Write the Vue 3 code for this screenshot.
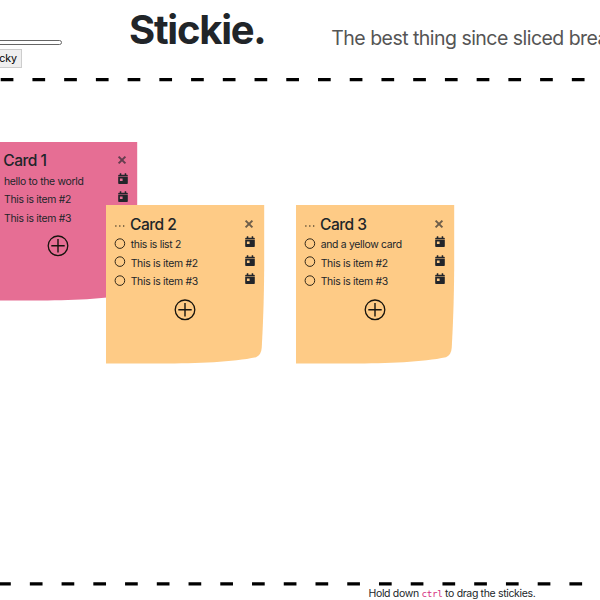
<script setup>
const cards = [
  { id: 1, x: -21, y: 141.5, color: '#e66e94', title: 'Card 1', items: ['hello to the world', 'This is item #2', 'This is item #3'] },
  { id: 2, x: 105.7, y: 205, color: '#fecb86', title: 'Card 2', items: ['this is list 2', 'This is item #2', 'This is item #3'] },
  { id: 3, x: 295.7, y: 205, color: '#fecb86', title: 'Card 3', items: ['and a yellow card', 'This is item #2', 'This is item #3'] },
]
</script>

<template>
  <div class="page">
    <header class="header">
      <div class="creator">
        <div class="field"></div>
        <button class="add">Add sticky</button>
      </div>
      <h1 class="brand">Stickie.</h1>
      <p class="tagline">The best thing since sliced bread.</p>
    </header>
    <svg class="rule" width="600" height="4" viewBox="0 0 600 4">
      <line x1="0.7" y1="1.6" x2="600" y2="1.6" stroke="#000" stroke-width="3.2" stroke-dasharray="12.7 19.03" />
    </svg>

    <main class="board">
      <section v-for="card in cards" :key="card.id" class="card" :style="{ left: card.x + 'px', top: card.y - 82 + 'px' }">
        <svg class="paper" width="159" height="159" viewBox="0 0 159 159">
          <path d="M0 0H158.2V62C158 94 157 120 155.7 143Q155.2 150 150 152.2C127 157 92 158.4 55 158.4H0Z" :fill="card.color" />
        </svg>
        <div class="content">
          <div class="title-row">
            <svg class="dots" width="12" height="4" viewBox="0 0 12 4" fill="#3c3322">
              <circle cx="1.9" cy="2" r=".75" /><circle cx="5.8" cy="2" r=".75" /><circle cx="9.7" cy="2" r=".75" />
            </svg>
            <h2 class="title">{{ card.title }}</h2>
            <svg class="close" width="10" height="10" viewBox="0 0 10 10">
              <path d="M1.6 1.6L8.4 8.4M8.4 1.6L1.6 8.4" fill="none" stroke="#20242a" stroke-opacity=".65" stroke-width="2" />
            </svg>
          </div>
          <div v-for="item in card.items" :key="item" class="item">
            <svg class="check" width="12" height="12" viewBox="0 0 12 12">
              <circle cx="5.9" cy="5.6" r="4.8" fill="none" stroke="#302719" stroke-width="1" />
            </svg>
            <span class="label">{{ item }}</span>
            <svg class="calendar" width="10" height="12" viewBox="0 0 10 12">
              <path d="M1.8 .3h1.5v1.4h3.4V.3h1.5v1.4h.8q.8 0 .8.8v1H.2v-1q0-.8.8-.8h.8Z" fill="#22252a" />
              <path fill-rule="evenodd" d="M.2 4h9.6v6.2q0 .8-.8.8H1q-.8 0-.8-.8ZM1.9 5.5v2.6h2.7V5.500Z" fill="#22252a" />
            </svg>
          </div>
          <svg class="plus" width="22" height="22" viewBox="0 0 22 22">
            <path d="M11 4.100V17.500M4.300 10.800H17.700" stroke="#16130d" stroke-width="1.400" />
            <circle cx="11" cy="10.800" r="9.800" fill="none" stroke="#16130d" stroke-width="1.300" />
          </svg>
        </div>
      </section>
    </main>

    <footer class="footer">
      <svg class="rule" width="600" height="4" viewBox="0 0 600 4">
        <line x1="-1.9" y1="1.9" x2="582.5" y2="1.9" stroke="#000" stroke-width="3.2" stroke-dasharray="12.7 19.04" />
      </svg>
      <p class="hint">Hold down <code>ctrl</code> to drag the stickies.</p>
    </footer>
  </div>
</template>

<style>
body {
  margin: 0;
  background: #fff;
  overflow: hidden;
}
</style>

<style scoped>
.page {
  width: 600px;
  height: 600px;
  overflow: hidden;
  display: flex;
  flex-direction: column;
  font-family: Inter, "Liberation Sans", sans-serif;
  color: #212529;
}
.header {
  height: 78px;
  flex: none;
  display: flex;
  align-items: flex-start;
  white-space: nowrap;
}
.creator {
  width: 129px;
  flex: none;
  padding-top: 39.5px;
  display: flex;
  flex-direction: column;
  align-items: flex-start;
}
.field {
  box-sizing: border-box;
  width: 92px;
  height: 5.5px;
  margin-left: -30px;
  border: 1px solid #666;
  border-radius: 3px;
}
.add {
  box-sizing: border-box;
  height: 19px;
  width: 62px;
  margin: 3.5px 0 0 -40px;
  padding: 0 4px 0 0;
  text-align: right;
  border: 1px solid #cdcdcd;
  background: #efefef;
  color: #000;
  font: 10.7px/17px Inter, sans-serif;
  letter-spacing: -0.1px;
}
.brand {
  width: 202.3px;
  flex: none;
  margin: 6px 0 0;
  font-size: 40px;
  line-height: 48px;
  font-weight: 700;
  letter-spacing: -1.25px;
}
.tagline {
  margin: 26px 0 0;
  font-size: 19.5px;
  line-height: 24px;
  letter-spacing: -0.53px;
  color: #555;
}
.rule {
  display: block;
  flex: none;
}
.board {
  position: relative;
  height: 500px;
  flex: none;
}
.card {
  position: absolute;
  width: 158px;
  height: 158px;
}
.paper {
  position: absolute;
  left: 0;
  top: 0;
}
.content {
  position: relative;
  padding: 9px 8px 0;
  display: flex;
  flex-direction: column;
}
.title-row {
  height: 21px;
  display: flex;
  align-items: center;
}
.dots {
  margin-top: 2px;
}
.title {
  flex: 1;
  margin: 0 0 0 4.3px;
  font-size: 15.6px;
  line-height: 20px;
  font-weight: 500;
  letter-spacing: -0.5px;
}
.close {
  margin: -2px 2px 0 0;
}
.item {
  height: 18.5px;
  display: flex;
  align-items: center;
}
.label {
  flex: 1;
  margin: 2px 0 0 5px;
  font-size: 10.4px;
  line-height: 16px;
  letter-spacing: -0.3px;
  white-space: nowrap;
}
.check {
  margin-top: -1px;
}
.calendar {
  margin: -4px 0.7px 0 0;
}
.plus {
  align-self: center;
  margin-top: 8px;
}
.footer {
  flex: none;
}
.hint {
  margin: 0 0 0 368.5px;
  font-size: 10.5px;
  line-height: 15px;
  letter-spacing: -0.34px;
  white-space: nowrap;
}
.hint code {
  font-family: "DejaVu Sans Mono", "Liberation Mono", monospace;
  font-size: 9.3px;
  color: #d63384;
}
</style>
